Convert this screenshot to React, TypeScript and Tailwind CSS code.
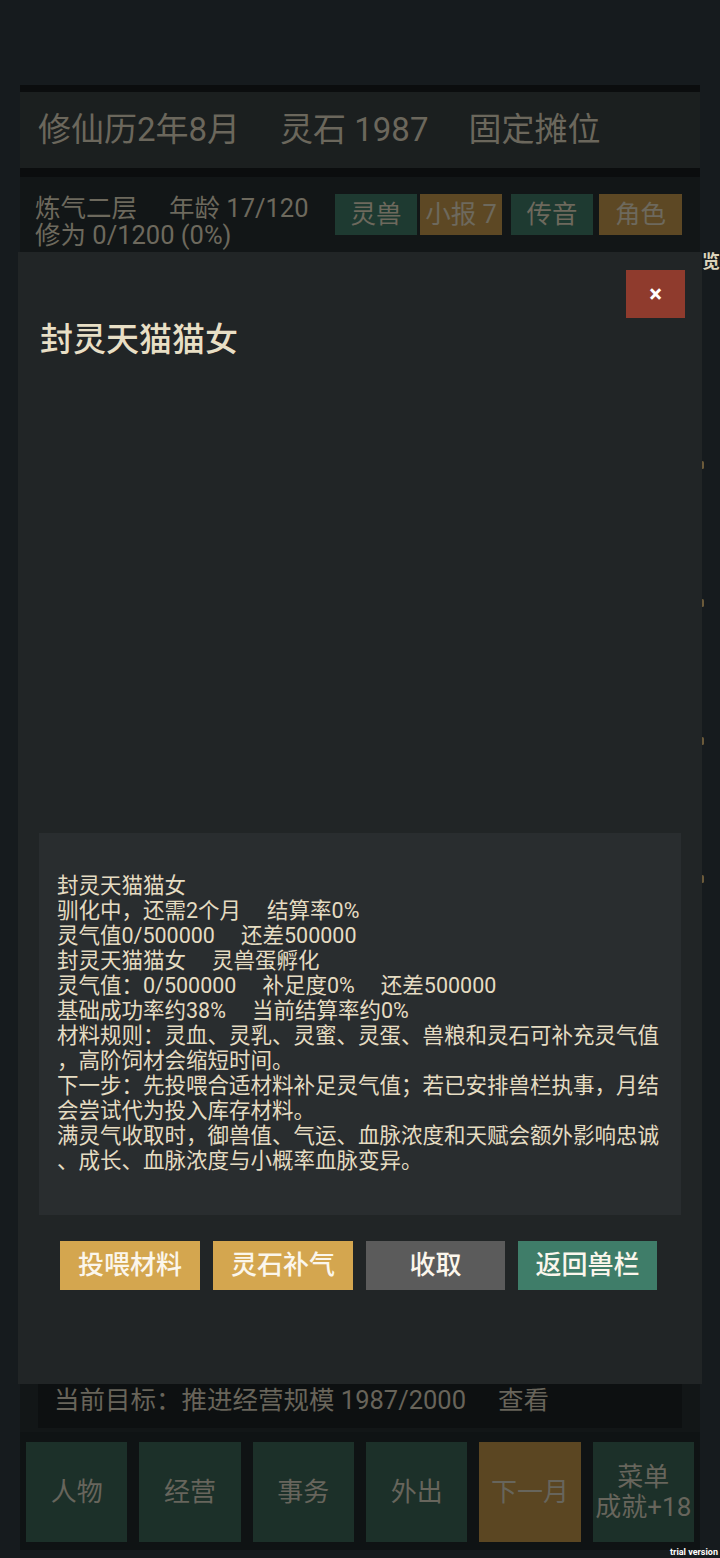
import React from 'react';

const topTabs = [
  { label: '灵兽', bg: 'bg-[#1e3a31]', ml: 'ml-0', w: 'w-[82px]' },
  { label: '小报 7', bg: 'bg-[#5d4824]', ml: 'ml-[3px]', w: 'w-[82px]' },
  { label: '传音', bg: 'bg-[#1e3a31]', ml: 'ml-[9px]', w: 'w-[82px]' },
  { label: '角色', bg: 'bg-[#5d4824]', ml: 'ml-[6px]', w: 'w-[83px]' },
];

const navItems = [
  { label: ['人物'], bg: 'bg-[#1c3029]' },
  { label: ['经营'], bg: 'bg-[#1c3029]' },
  { label: ['事务'], bg: 'bg-[#1c3029]' },
  { label: ['外出'], bg: 'bg-[#1c3029]' },
  { label: ['下一月'], bg: 'bg-[#5b4622]' },
  { label: ['菜单', '成就+18'], bg: 'bg-[#1c3029]' },
];

// info lines, segments are separated by a fixed gap
const infoLines: string[][] = [
  ['封灵天猫猫女'],
  ['驯化中，还需2个月', '结算率0%'],
  ['灵气值0/500000', '还差500000'],
  ['封灵天猫猫女', '灵兽蛋孵化'],
  ['灵气值：0/500000', '补足度0%', '还差500000'],
  ['基础成功率约38%', '当前结算率约0%'],
  ['材料规则：灵血、灵乳、灵蜜、灵蛋、兽粮和灵石可补充灵气值'],
  ['，高阶饲材会缩短时间。'],
  ['下一步：先投喂合适材料补足灵气值；若已安排兽栏执事，月结'],
  ['会尝试代为投入库存材料。'],
  ['满灵气收取时，御兽值、气运、血脉浓度和天赋会额外影响忠诚'],
  ['、成长、血脉浓度与小概率血脉变异。'],
];

const actions = [
  { label: '投喂材料', bg: 'bg-[#d4a64f]', w: 'w-[140px]' },
  { label: '灵石补气', bg: 'bg-[#d4a64f]', w: 'w-[140px]' },
  { label: '收取', bg: 'bg-[#5b5b5b]', w: 'w-[139px]' },
  { label: '返回兽栏', bg: 'bg-[#3f7d69]', w: 'w-[139px]' },
];

export default function App() {
  return (
    <div className="relative w-[720px] h-[1558px] overflow-hidden bg-[#161b1e] font-[Roboto,'Noto_Sans_CJK_SC',sans-serif]">
      {/* Header */}
      <div className="mt-[85px] mx-[20px] border-t-[7px] border-[#0b0d0e] h-[83px] bg-[#1b1f1f] flex items-center pl-[18px] gap-[40px] text-[33px] text-[#6b675c] whitespace-nowrap">
        <span>修仙历2年8月</span>
        <span>灵石 1987</span>
        <span>固定摊位</span>
      </div>
      <div className="mx-[20px] h-[9px] bg-[#0b0d0e]"></div>

      {/* Main panel (behind the dialog) */}
      <div className="mx-[20px] h-[1255px] bg-[#121617] flex flex-col">
        <div className="flex pt-[18px]">
          <div className="w-[315px] pl-[15px] text-[25.5px] leading-[27px] text-[#6d695d] whitespace-nowrap">
            <div>
              炼气二层<span className="ml-[32px]">年龄 17/120</span>
            </div>
            <div>修为 0/1200 (0%)</div>
            <div className="mt-[4px]">
              灵力 12<span className="ml-[80px]">灵石</span>
              <span className="ml-[150px]">御兽</span>
              <span className="ml-[90px]">寿</span>
              <span className="ml-[40px]">气运</span>
            </div>
          </div>
          <div className="flex -mt-[1px]">
            {topTabs.map((t) => (
              <div
                key={t.label}
                className={`${t.bg} ${t.ml} ${t.w} h-[41px] flex items-center justify-center text-[25.5px] text-[#6d695d] whitespace-nowrap`}
              >
                {t.label}
              </div>
            ))}
          </div>
        </div>

        {/* Current goal */}
        <div className="mt-auto mb-[4px] mx-[18px] h-[56px] bg-[#0d1011] flex items-center pl-[16px] text-[25.5px] text-[#68645a] whitespace-nowrap">
          当前目标：推进经营规模 1987/2000<span className="ml-[32px]">查看</span>
        </div>
      </div>

      {/* Bottom nav */}
      <div className="mx-[20px] h-[118px] bg-[#0f1314] grid grid-cols-6 gap-[12px] px-[6px] pt-[10px] pb-[8px]">
        {navItems.map((n) => (
          <div
            key={n.label.join('')}
            className={`${n.bg} flex flex-col items-center justify-center text-[26px] leading-[30px] text-[#67655c] whitespace-nowrap`}
          >
            {n.label.map((l) => (
              <span key={l}>{l}</span>
            ))}
          </div>
        ))}
      </div>

      {/* Stray glyph at right edge */}
      <span className="absolute left-[702px] top-[250px] text-[18px] leading-[24px] font-bold text-[#ddd4bb]">
        览
      </span>
      <span className="absolute left-[701px] top-[461px] w-[3px] h-[8px] rounded-full bg-[#6b5a3a]"></span>
      <span className="absolute left-[701px] top-[599px] w-[3px] h-[8px] rounded-full bg-[#6b5a3a]"></span>
      <span className="absolute left-[701px] top-[737px] w-[3px] h-[8px] rounded-full bg-[#6b5a3a]"></span>
      <span className="absolute left-[701px] top-[875px] w-[3px] h-[8px] rounded-full bg-[#6b5a3a]"></span>

      {/* Dialog */}
      <div className="absolute left-[18px] top-[252px] w-[684px] h-[1132px] bg-[#212526] flex flex-col">
        <button className="absolute top-[18px] right-[17px] w-[59px] h-[48px] bg-[#8f3b2d] flex items-center justify-center text-white text-[24px] font-bold leading-none">
          ×
        </button>
        <div className="pt-[68px] pl-[22px] text-[33px] leading-[40px] font-medium text-[#e8dfc5] whitespace-nowrap">
          封灵天猫猫女
        </div>
        <div className="h-[473px]"></div>

        <div className="mx-[21px] h-[382px] bg-[#292d2f] pt-[40px] pl-[18px] text-[21.5px] leading-[25px] text-[#e5dcc2]">
          {infoLines.map((line, i) => (
            <div key={i} className="whitespace-nowrap">
              {line.map((seg, j) => (
                <span key={j} className={j > 0 ? 'ml-[26px]' : ''}>
                  {seg}
                </span>
              ))}
            </div>
          ))}
        </div>

        <div className="mt-[26px] ml-[42px] flex gap-[13px]">
          {actions.map((a) => (
            <div
              key={a.label}
              className={`${a.bg} ${a.w} h-[49px] flex items-center justify-center text-[26px] font-medium text-[#fbf6ec] whitespace-nowrap`}
            >
              {a.label}
            </div>
          ))}
        </div>
      </div>

      <span className="absolute right-[2px] bottom-[1px] text-[9px] leading-[10px] font-bold text-white font-[Roboto,sans-serif]">
        trial version
      </span>
    </div>
  );
}
